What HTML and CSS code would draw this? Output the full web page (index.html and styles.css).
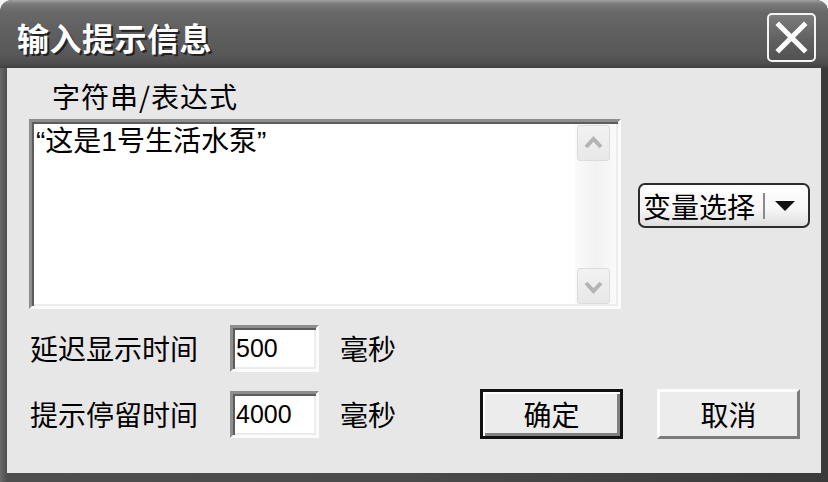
FILE: index.html
```html
<!DOCTYPE html>
<html lang="zh-CN">
<head>
<meta charset="utf-8">
<title>输入提示信息</title>
<link rel="stylesheet" href="styles.css">
</head>
<body>
<div class="window">
  <div class="titlebar">
    <span class="title">输入提示信息</span>
    <div class="close">
      <svg width="45" height="45" viewBox="0 0 45 45"><path d="M10 10 L35 35 M35 10 L10 35" stroke="#fff" stroke-width="5" stroke-linecap="square" fill="none"/></svg>
    </div>
  </div>
  <div class="client">
    <div class="caption">字符串/表达式</div>
    <div class="editor-row">
      <div class="memo">
        <div class="memo-text">“这是1号生活水泵”</div>
        <div class="vscroll">
          <div class="sbtn"><svg width="31" height="34" viewBox="0 0 31 34"><path d="M8 21 L15.5 13 L23 21" stroke="#b4b4b4" stroke-width="4" fill="none"/></svg></div>
          <div class="track"></div>
          <div class="sbtn"><svg width="31" height="34" viewBox="0 0 31 34"><path d="M8 14 L15.5 22 L23 14" stroke="#b4b4b4" stroke-width="4" fill="none"/></svg></div>
        </div>
      </div>
      <div class="varsel">
        <span class="varsel-text">变量选择</span>
        <span class="sep"></span>
        <svg class="tri" width="20" height="10" viewBox="0 0 20 10"><path d="M0 0 H20 L10 10 Z" fill="#111"/></svg>
      </div>
    </div>
    <div class="field-row r1">
      <span class="flabel">延迟显示时间</span>
      <div class="edit">500</div>
      <span class="unit">毫秒</span>
    </div>
    <div class="field-row r2">
      <span class="flabel">提示停留时间</span>
      <div class="edit">4000</div>
      <span class="unit">毫秒</span>
      <button class="btn default">确定</button>
      <button class="btn cancel">取消</button>
    </div>
  </div>
</div>
</body>
</html>
```
FILE: styles.css
```css
html, body {
  margin: 0;
  padding: 0;
  background: #f4f4f4;
}
body {
  font-family: "Noto Sans CJK SC", "Liberation Sans", sans-serif;
  color: #000;
}
.window {
  width: 828px;
  height: 482px;
  box-sizing: border-box;
  background: linear-gradient(to right, #6a6a6a 0, #4e4e4e 7px, #4a4a4a 50%, #3a3a3a 100%);
  border-radius: 12px 12px 0 0;
  overflow: hidden;
  display: flex;
  flex-direction: column;
}
.titlebar {
  height: 68px;
  flex: none;
  display: flex;
  justify-content: space-between;
  align-items: flex-start;
  padding: 0 12px 0 17px;
  background: linear-gradient(#a0a0a0 0, #7a7a7a 4px, #686868 12px, #5e5e5e 35px, #585858 55px, #4c4c4c 64px, #3e3e3e 68px);
}
.title {
  margin-top: 19px;
  font-size: 32px;
  line-height: 36px;
  font-weight: 700;
  color: #fff;
  text-shadow: 2px 2px 0 #222;
  letter-spacing: 0.5px;
}
.close {
  margin-top: 13px;
  width: 49px;
  height: 49px;
  box-sizing: border-box;
  border: 2px solid #f4f4f4;
  border-radius: 5px;
  background: linear-gradient(#7c7c7c, #5e5e5e 60%, #525252);
  display: flex;
  align-items: center;
  justify-content: center;
}
.client {
  flex: 1;
  margin: 0 7px 9px 7px;
  background: #e7e7e7;
}
.caption {
  margin-top: 12px;
  padding-left: 45px;
  font-size: 28px;
  line-height: 32px;
  letter-spacing: 1px;
}
.editor-row {
  display: flex;
  align-items: flex-start;
  margin-top: 7px;
  padding-left: 22px;
}
.memo {
  width: 592px;
  height: 190px;
  box-sizing: border-box;
  border: 3px solid;
  border-color: #8e8e8e #fbfbfb #fbfbfb #8e8e8e;
  box-shadow: inset 2px 2px 0 #5c5c5c, inset -2px -2px 0 #ececec;
  background: #fff;
  display: flex;
  padding: 2px 2px 2px 2px;
}
.memo-text {
  flex: 1;
  padding: 1px 2px;
  font-family: "Liberation Sans", "Noto Sans CJK SC", sans-serif;
  font-size: 28px;
  line-height: 34px;
}
.vscroll {
  width: 37px;
  display: flex;
  flex-direction: column;
  padding: 1px 2px 0 2px;
  background: linear-gradient(to right, #fafafa, #f2f2f2 50%, #fafafa);
}
.sbtn {
  width: 33px;
  height: 36px;
  box-sizing: border-box;
  border: 1px solid #dcdcdc;
  border-radius: 3px;
  background: linear-gradient(#f2f2f2, #e8e8e8);
  display: flex;
  align-items: center;
  justify-content: center;
}
.track {
  flex: 1;
}
.varsel {
  margin-left: 17px;
  margin-top: 64px;
  width: 172px;
  height: 45px;
  box-sizing: border-box;
  border: 2px solid #2c2c2c;
  border-radius: 7px;
  background: linear-gradient(#ffffff, #f6f6f6 60%, #dedede);
  display: flex;
  align-items: center;
  padding-left: 3px;
}
.varsel-text {
  font-size: 28px;
  line-height: 32px;
}
.sep {
  width: 2px;
  height: 26px;
  margin-left: 8px;
  background: #8a8a8a;
}
.tri {
  margin-left: 10px;
}
.field-row {
  display: flex;
  align-items: center;
  padding-left: 23px;
}
.r1 {
  margin-top: 15px;
  height: 48px;
}
.r2 {
  margin-top: 17px;
  height: 50px;
}
.flabel {
  width: 200px;
  font-size: 28px;
  line-height: 32px;
}
.edit {
  width: 89px;
  height: 47px;
  box-sizing: border-box;
  border: 3px solid;
  border-color: #8e8e8e #fbfbfb #fbfbfb #8e8e8e;
  box-shadow: inset 2px 2px 0 #5c5c5c, inset -2px -2px 0 #ececec;
  background: #fff;
  display: flex;
  align-items: center;
  padding-left: 3px;
  font-family: "Liberation Sans", "DejaVu Sans", sans-serif;
  font-size: 25px;
}
.unit {
  margin-left: 21px;
  width: 140px;
  font-size: 28px;
  line-height: 32px;
}
.btn {
  width: 143px;
  height: 50px;
  box-sizing: border-box;
  padding: 0;
  margin: 0;
  font-family: "Noto Sans CJK SC", sans-serif;
  font-size: 28px;
  line-height: 32px;
  color: #000;
  background: #ececec;
  border: 3px solid;
  border-color: #fdfdfd #7c7c7c #7c7c7c #fdfdfd;
}
.default {
  border: 3px solid #111;
  box-shadow: inset 2px 2px 0 #fff, inset -3px -3px 0 #808080;
}
.cancel {
  margin-left: 34px;
}
```
